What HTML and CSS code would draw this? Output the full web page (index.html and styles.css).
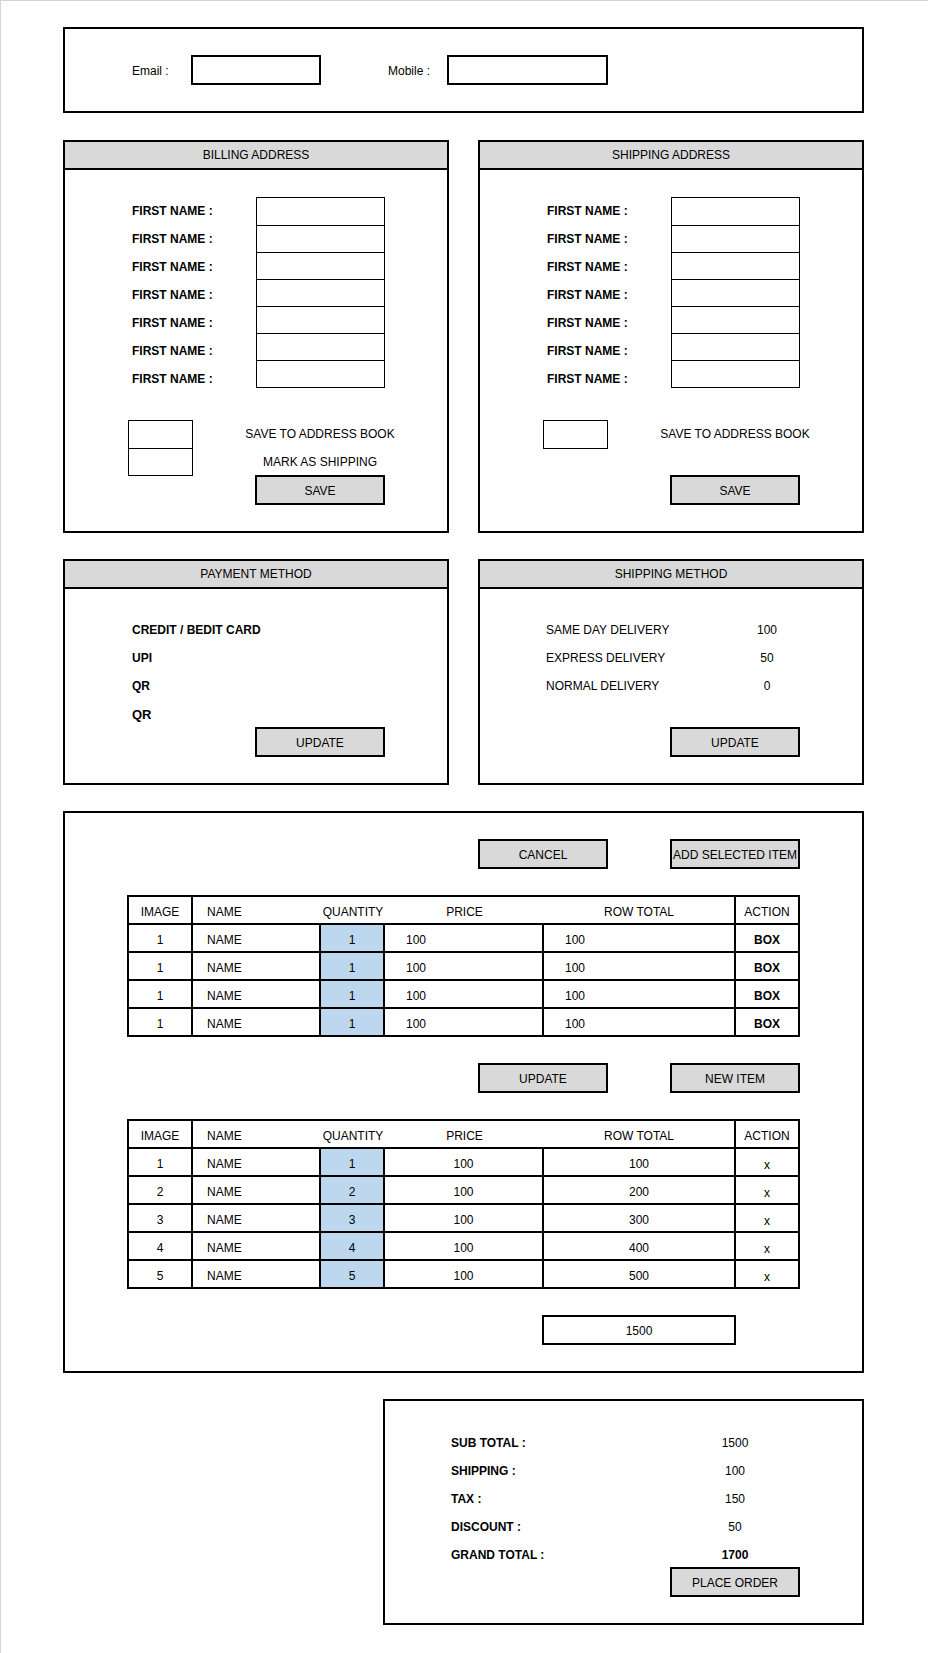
FILE: index.html
```html
<!DOCTYPE html>
<html lang="en">
<head>
  <meta charset="UTF-8">
  <meta name="viewport" content="width=device-width, initial-scale=1.0">
  <title>Checkout</title>
  <link rel="stylesheet" href="styles.css">
</head>
<body>
  <div class="sheet">

    <!-- Contact details -->
    <section class="box contact">
      <span class="contact-label email-label">Email :</span>
      <div class="input email-input"></div>
      <span class="contact-label mobile-label">Mobile :</span>
      <div class="input mobile-input"></div>
    </section>

    <!-- Addresses -->
    <div class="pair">
      <section class="box panel">
        <h2 class="panel-title">BILLING ADDRESS</h2>
        <div class="panel-body">
          <div class="fields">
            <div class="field-labels">
              <span>FIRST NAME :</span>
              <span>FIRST NAME :</span>
              <span>FIRST NAME :</span>
              <span>FIRST NAME :</span>
              <span>FIRST NAME :</span>
              <span>FIRST NAME :</span>
              <span>FIRST NAME :</span>
            </div>
            <div class="field-stack">
              <div></div><div></div><div></div><div></div><div></div><div></div><div></div>
            </div>
          </div>
          <div class="options">
            <div class="check-stack"><div></div><div></div></div>
            <div class="option-side">
              <span class="option">SAVE TO ADDRESS BOOK</span>
              <span class="option">MARK AS SHIPPING</span>
              <button class="btn">SAVE</button>
            </div>
          </div>
        </div>
      </section>

      <section class="box panel">
        <h2 class="panel-title">SHIPPING ADDRESS</h2>
        <div class="panel-body">
          <div class="fields">
            <div class="field-labels">
              <span>FIRST NAME :</span>
              <span>FIRST NAME :</span>
              <span>FIRST NAME :</span>
              <span>FIRST NAME :</span>
              <span>FIRST NAME :</span>
              <span>FIRST NAME :</span>
              <span>FIRST NAME :</span>
            </div>
            <div class="field-stack">
              <div></div><div></div><div></div><div></div><div></div><div></div><div></div>
            </div>
          </div>
          <div class="options">
            <div class="check-stack"><div></div></div>
            <div class="option-side">
              <span class="option">SAVE TO ADDRESS BOOK</span>
              <span class="option"></span>
              <button class="btn">SAVE</button>
            </div>
          </div>
        </div>
      </section>
    </div>

    <!-- Payment / shipping method -->
    <div class="pair">
      <section class="box panel">
        <h2 class="panel-title">PAYMENT METHOD</h2>
        <div class="panel-body">
          <ul class="methods">
            <li>CREDIT / BEDIT CARD</li>
            <li>UPI</li>
            <li>QR</li>
            <li class="strong">QR</li>
          </ul>
          <button class="btn method-btn">UPDATE</button>
        </div>
      </section>

      <section class="box panel">
        <h2 class="panel-title">SHIPPING METHOD</h2>
        <div class="panel-body">
          <div class="rates">
            <div class="rate"><span class="rate-name">SAME DAY DELIVERY</span><span class="rate-cost">100</span></div>
            <div class="rate"><span class="rate-name">EXPRESS DELIVERY</span><span class="rate-cost">50</span></div>
            <div class="rate"><span class="rate-name">NORMAL DELIVERY</span><span class="rate-cost">0</span></div>
            <div class="rate"></div>
          </div>
          <button class="btn method-btn">UPDATE</button>
        </div>
      </section>
    </div>

    <!-- Cart -->
    <section class="box cart">
      <div class="cart-actions">
        <button class="btn">CANCEL</button>
        <button class="btn">ADD SELECTED ITEM</button>
      </div>

      <table class="items">
        <colgroup>
          <col class="c-img"><col class="c-name"><col class="c-qty"><col class="c-price"><col class="c-total"><col class="c-act">
        </colgroup>
        <thead>
          <tr><th>IMAGE</th><th class="open name">NAME</th><th class="open">QUANTITY</th><th class="open">PRICE</th><th>ROW TOTAL</th><th>ACTION</th></tr>
        </thead>
        <tbody>
          <tr><td>1</td><td class="name">NAME</td><td class="qty">1</td><td class="pad">100</td><td class="pad">100</td><td class="act">BOX</td></tr>
          <tr><td>1</td><td class="name">NAME</td><td class="qty">1</td><td class="pad">100</td><td class="pad">100</td><td class="act">BOX</td></tr>
          <tr><td>1</td><td class="name">NAME</td><td class="qty">1</td><td class="pad">100</td><td class="pad">100</td><td class="act">BOX</td></tr>
          <tr><td>1</td><td class="name">NAME</td><td class="qty">1</td><td class="pad">100</td><td class="pad">100</td><td class="act">BOX</td></tr>
        </tbody>
      </table>

      <div class="cart-actions">
        <button class="btn">UPDATE</button>
        <button class="btn">NEW ITEM</button>
      </div>

      <table class="items">
        <colgroup>
          <col class="c-img"><col class="c-name"><col class="c-qty"><col class="c-price"><col class="c-total"><col class="c-act">
        </colgroup>
        <thead>
          <tr><th>IMAGE</th><th class="open name">NAME</th><th class="open">QUANTITY</th><th class="open">PRICE</th><th>ROW TOTAL</th><th>ACTION</th></tr>
        </thead>
        <tbody>
          <tr><td>1</td><td class="name">NAME</td><td class="qty">1</td><td>100</td><td>100</td><td class="x">x</td></tr>
          <tr><td>2</td><td class="name">NAME</td><td class="qty">2</td><td>100</td><td>200</td><td class="x">x</td></tr>
          <tr><td>3</td><td class="name">NAME</td><td class="qty">3</td><td>100</td><td>300</td><td class="x">x</td></tr>
          <tr><td>4</td><td class="name">NAME</td><td class="qty">4</td><td>100</td><td>400</td><td class="x">x</td></tr>
          <tr><td>5</td><td class="name">NAME</td><td class="qty">5</td><td>100</td><td>500</td><td class="x">x</td></tr>
        </tbody>
      </table>

      <div class="cart-total">1500</div>
    </section>

    <!-- Order summary -->
    <section class="box summary">
      <div class="sum-row"><span class="sum-label">SUB TOTAL :</span><span class="sum-value">1500</span></div>
      <div class="sum-row"><span class="sum-label">SHIPPING :</span><span class="sum-value">100</span></div>
      <div class="sum-row"><span class="sum-label">TAX :</span><span class="sum-value">150</span></div>
      <div class="sum-row"><span class="sum-label">DISCOUNT :</span><span class="sum-value">50</span></div>
      <div class="sum-row"><span class="sum-label">GRAND TOTAL :</span><span class="sum-value strong">1700</span></div>
      <button class="btn order-btn">PLACE ORDER</button>
    </section>

  </div>
</body>
</html>
```

FILE: styles.css
```css
/* General styling */
* {
  box-sizing: border-box;
}
body {
  margin: 0;
  min-height: 1653px;
  border-top: 1px solid #d4d4d4;
  border-left: 1px solid #d4d4d4;
  background: #fff;
  color: #000;
  font-family: "Liberation Sans", Arial, sans-serif;
  font-size: 12px;
}
.sheet {
  display: flex;
  flex-direction: column;
  align-items: flex-start;
  gap: 26px;
  padding: 26px 0 0 62px;
}
.box {
  border: 2px solid #000;
  background: #fff;
}
.btn {
  display: block;
  width: 130px;
  height: 30px;
  padding: 1px 0 0;
  border: 2px solid #000;
  background: #d9d9d9;
  color: #000;
  font: inherit;
  white-space: nowrap;
}

/* Contact box */
.contact {
  width: 801px;
  display: flex;
  align-items: center;
  margin-bottom: 1px;
  padding: 26px 0;
}
.contact-label {
  padding-top: 2px;
}
.email-label {
  margin-left: 67px;
  width: 59px;
}
.mobile-label {
  margin-left: 67px;
  width: 59px;
}
.input {
  height: 30px;
  border: 2px solid #000;
}
.email-input {
  width: 130px;
}
.mobile-input {
  width: 161px;
}

/* Side by side panels */
.pair {
  display: flex;
  gap: 29px;
}
.panel {
  width: 386px;
}
.panel-title {
  margin: 0;
  height: 28px;
  line-height: 26px;
  border-bottom: 2px solid #000;
  background: #d9d9d9;
  font-size: 12px;
  font-weight: normal;
  text-align: center;
}
.panel-body {
  padding: 27px 0 26px 63px;
}
.fields {
  display: flex;
  align-items: flex-start;
}
.field-labels {
  width: 128px;
  padding-left: 4px;
}
.field-labels span {
  display: block;
  height: 28px;
  line-height: 28px;
  font-weight: bold;
}
.field-stack,
.check-stack {
  border: 1px solid #000;
}
.field-stack {
  width: 129px;
}
.check-stack {
  width: 65px;
}
.field-stack div,
.check-stack div {
  height: 27px;
}
.field-stack div + div,
.check-stack div + div {
  border-top: 1px solid #000;
}
.options {
  display: flex;
  align-items: flex-start;
  margin-top: 27px;
}
.option-side {
  width: 130px;
  margin-left: 62px;
}
.option {
  display: flex;
  justify-content: center;
  align-items: center;
  height: 28px;
  white-space: nowrap;
}
.option-side .btn {
  margin-top: -1px;
}

/* Payment and shipping method */
.methods {
  list-style: none;
  margin: 0;
  padding: 0 0 0 4px;
}
.methods li {
  height: 28px;
  line-height: 29px;
  font-weight: bold;
}
.methods li.strong {
  font-size: 13px;
}
.rate {
  display: flex;
  height: 28px;
  line-height: 29px;
}
.rate-name {
  width: 192px;
  padding-left: 3px;
}
.rate-cost {
  width: 64px;
  text-align: center;
}
.method-btn {
  margin: -1px 0 0 127px;
}

/* Cart */
.cart {
  width: 801px;
  display: flex;
  flex-direction: column;
  gap: 26px;
  padding: 26px 0 26px 62px;
}
.cart-actions {
  display: flex;
  gap: 62px;
  padding-left: 351px;
}
.items {
  width: 673px;
  table-layout: fixed;
  border-collapse: separate;
  border-spacing: 0;
  border-top: 2px solid #000;
  border-left: 2px solid #000;
}
.c-img, .c-qty, .c-act { width: 64px; }
.c-name { width: 128px; }
.c-price { width: 159px; }
.c-total { width: 192px; }
.items th,
.items td {
  height: 28px;
  padding: 3px 0 0;
  border-right: 2px solid #000;
  border-bottom: 2px solid #000;
  font-weight: normal;
  text-align: center;
  white-space: nowrap;
}
.items th.open {
  border-right: none;
}
.items .name {
  padding-left: 14px;
  text-align: left;
}
.items td.pad {
  padding-left: 21px;
  text-align: left;
}
.items td.qty {
  background: #bdd7ee;
}
.items td.act {
  font-weight: bold;
}
.items td.x {
  padding-top: 5px;
}
.cart-total {
  width: 194px;
  height: 30px;
  margin-left: 415px;
  padding-top: 1px;
  border: 2px solid #000;
  line-height: 26px;
  text-align: center;
}

/* Order summary */
.summary {
  width: 481px;
  margin-left: 320px;
  padding: 27px 0 26px 66px;
}
.sum-row {
  display: flex;
  height: 28px;
  line-height: 30px;
}
.sum-label {
  width: 220px;
  font-weight: bold;
}
.sum-value {
  width: 128px;
  text-align: center;
}
.strong {
  font-weight: bold;
}
.order-btn {
  margin: -1px 0 0 219px;
}
```
